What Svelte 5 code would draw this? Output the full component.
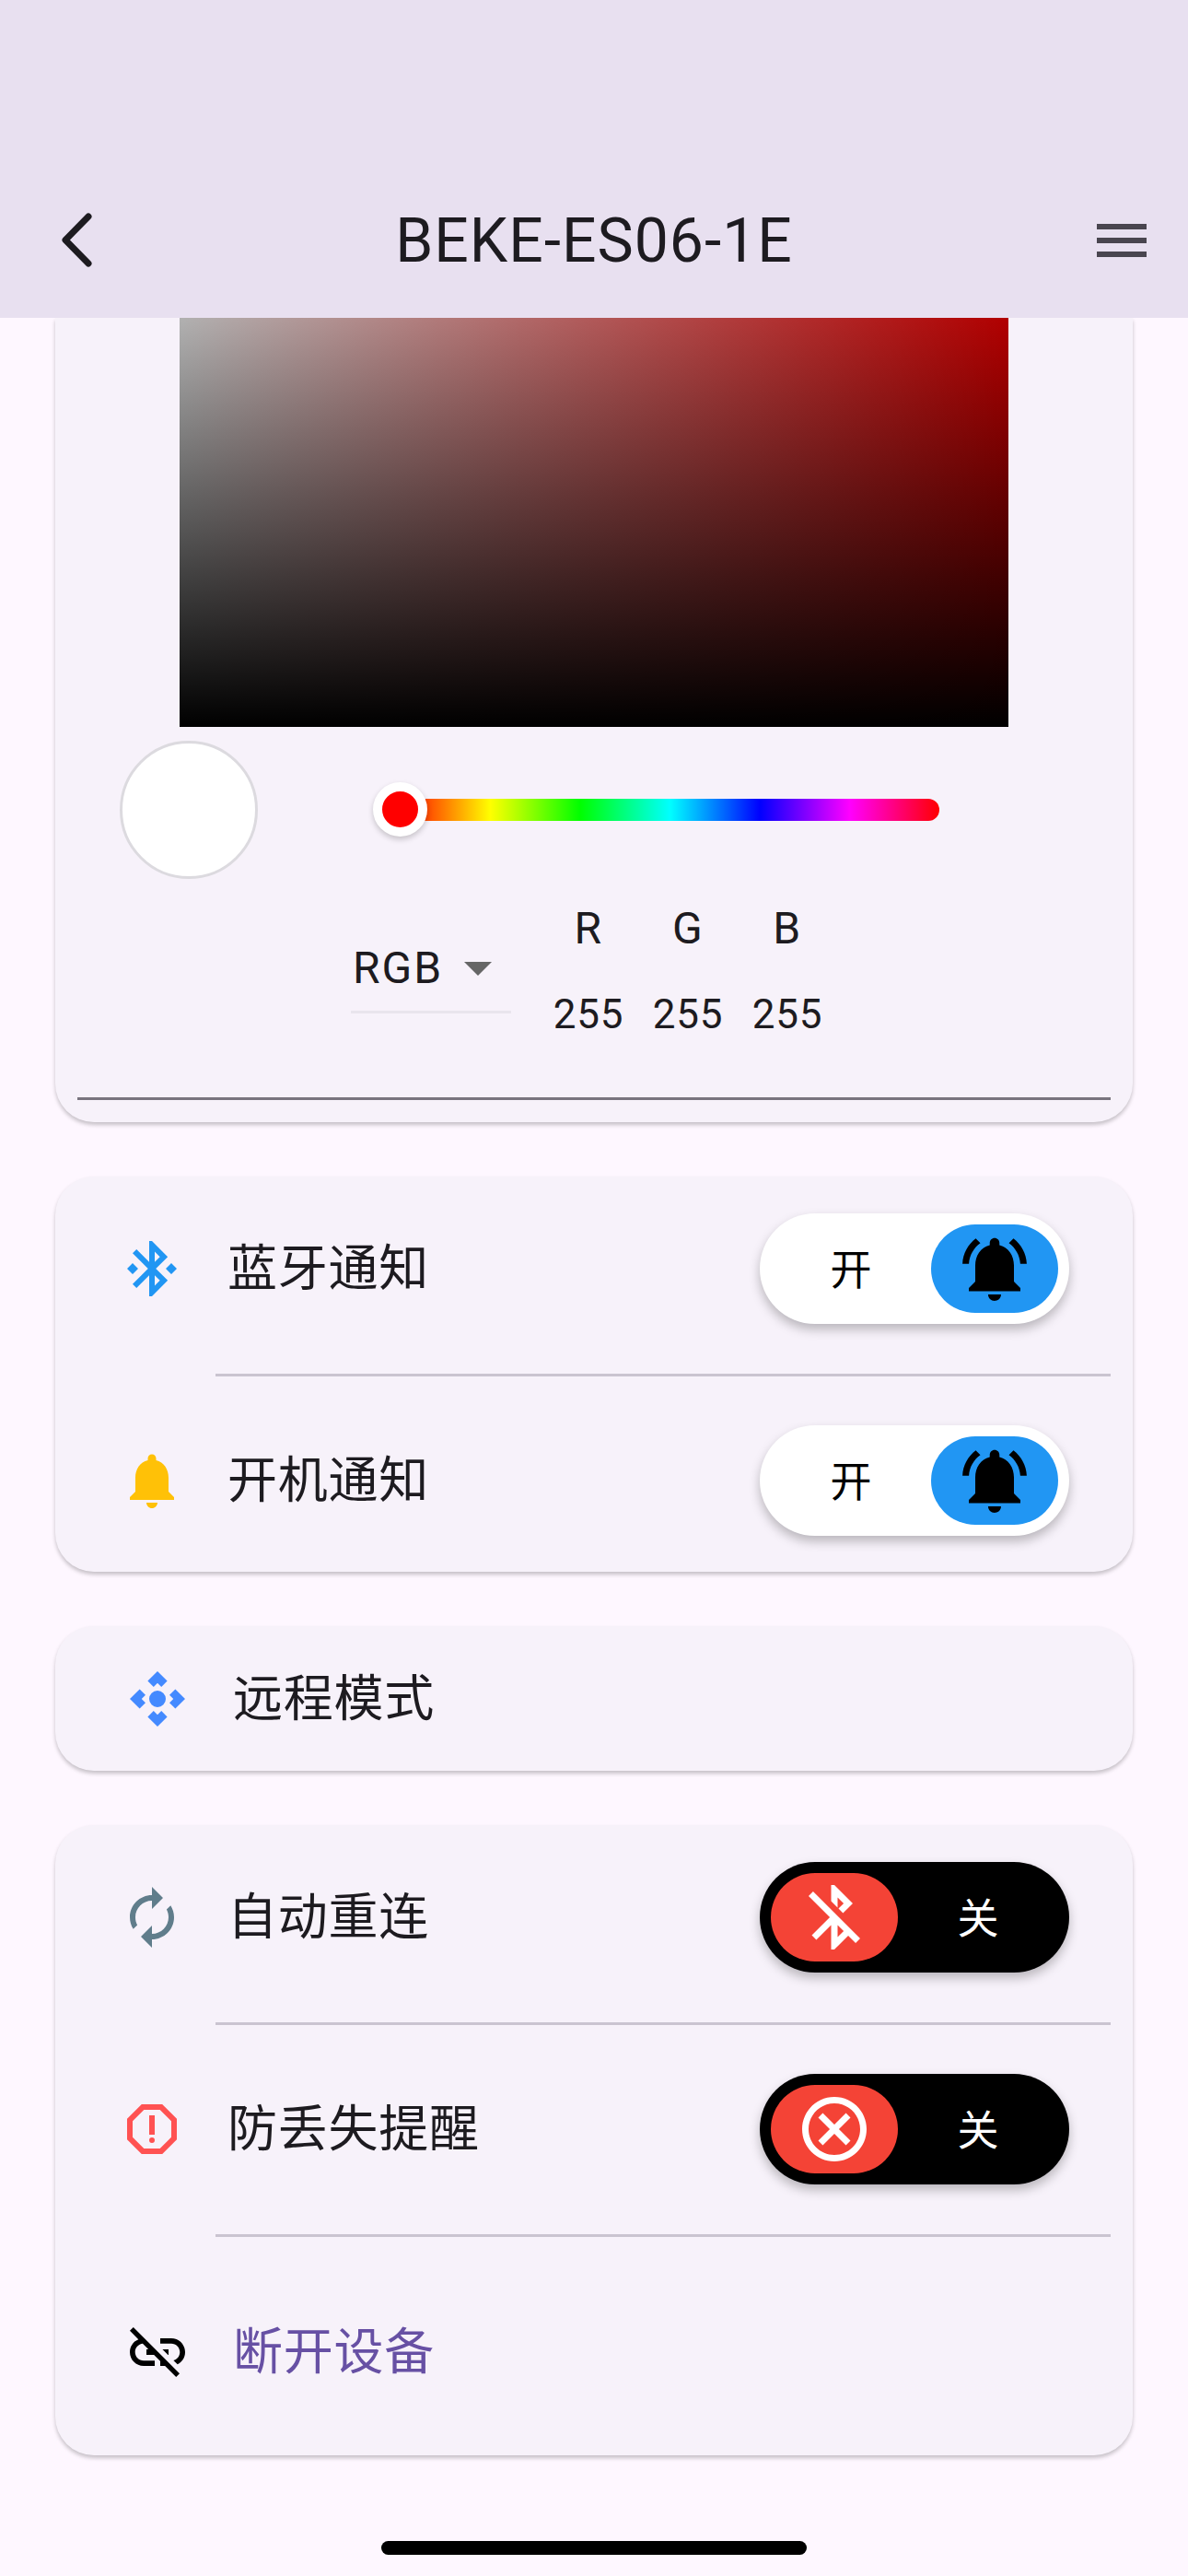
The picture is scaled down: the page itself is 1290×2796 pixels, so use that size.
<script lang="ts">
  const icons = {
    bluetooth:
      'M7 12l-2-2-2 2 2 2 2-2zm10.71-4.29L12 2h-1v7.59L6.41 5 5 6.41 10.59 12 5 17.59 6.41 19 11 14.41V22h1l5.71-5.71-4.3-4.29 4.3-4.29zM13 5.83l1.88 1.88L13 9.59V5.83zm1.88 10.46L13 18.17v-3.76l1.88 1.88zM19 10l-2 2 2 2 2-2-2-2z',
    bell: 'M12 22c1.1 0 2-.9 2-2h-4c0 1.1.89 2 2 2zm6-6v-5c0-3.07-1.64-5.64-4.5-6.32V4c0-.83-.67-1.5-1.5-1.5s-1.5.67-1.5 1.5v.68C7.63 5.36 6 7.92 6 11v5l-2 2v1h16v-1l-2-2z',
    bellActive:
      'M7.58 4.08L6.15 2.65C3.75 4.48 2.17 7.3 2.03 10.5h2c.15-2.65 1.51-4.97 3.55-6.42zm12.39 6.42h2c-.15-3.2-1.73-6.02-4.12-7.85l-1.42 1.43c2.02 1.45 3.39 3.77 3.54 6.42zM18 11c0-3.07-1.64-5.64-4.5-6.32V4c0-.83-.67-1.5-1.5-1.5s-1.5.67-1.5 1.5v.68C7.63 5.36 6 7.92 6 11v5l-2 2v1h16v-1l-2-2v-5zm-6 11c.14 0 .27-.01.4-.04.65-.14 1.18-.58 1.44-1.18.1-.24.15-.5.15-.78h-4c.01 1.1.9 2 2.01 2z',
    bluetoothOff:
      'M13 5.83l1.88 1.88-1.6 1.6 1.41 1.41 3.02-3.02L12 2h-1v5.03l2 2v-3.2zM5.41 4L4 5.41 10.59 12 5 17.59 6.41 19 11 14.41V22h1l4.29-4.29 2.3 2.29L20 18.59 5.41 4zM13 18.17v-3.76l1.88 1.88L13 18.17z',
    highlightOff:
      'M15.59 7L12 10.59 8.41 7 7 8.41 10.59 12 7 15.59 8.41 17 12 13.41 15.59 17 17 15.59 13.41 12 17 8.41 15.59 7zM12 2C6.47 2 2 6.47 2 12s4.47 10 10 10 10-4.47 10-10S17.53 2 12 2zm0 18c-4.41 0-8-3.59-8-8s3.59-8 8-8 8 3.59 8 8-3.59 8-8 8z',
    camera:
      'M15.54 5.54L13.41 7.66 12 6.25 10.59 7.66 8.46 5.54 12 2zM18.46 15.54l-2.12-2.13L17.75 12l-1.41-1.41 2.12-2.13L22 12zM8.46 18.46l2.13-2.12L12 17.75l1.41-1.41 2.12 2.12L12 22zM5.54 8.46l2.12 2.13L6.25 12l1.41 1.41-2.12 2.13L2 12zM12 9a3 3 0 1 0 0 6 3 3 0 0 0 0-6z',
    renew:
      'M12 6v3l4-4-4-4v3c-4.42 0-8 3.58-8 8 0 1.57.46 3.03 1.24 4.26L6.7 14.8c-.45-.83-.7-1.79-.7-2.8 0-3.31 2.69-6 6-6zm6.76 1.74L17.3 9.2c.44.84.7 1.79.7 2.8 0 3.31-2.69 6-6 6v-3l-4 4 4 4v-3c4.42 0 8-3.58 8-8 0-1.57-.46-3.03-1.24-4.26z',
    report:
      'M15.73 3H8.27L3 8.27v7.46L8.27 21h7.46L21 15.73V8.27L15.73 3zM19 14.9L14.9 19H9.1L5 14.9V9.1L9.1 5h5.8L19 9.1v5.8zM11 7h2v7h-2zM12 15a1 1 0 1 0 0 2 1 1 0 0 0 0-2z',
    linkOff:
      'M17 7h-4v1.9h4c1.71 0 3.1 1.39 3.1 3.1 0 1.43-.98 2.63-2.31 2.98l1.46 1.46C20.88 15.61 22 13.95 22 12c0-2.76-2.24-5-5-5zm-1 4h-2.19l2 2H16zM2 4.27l3.11 3.11C3.29 8.12 2 9.91 2 12c0 2.76 2.24 5 5 5h4v-1.9H7c-1.71 0-3.1-1.39-3.1-3.1 0-1.59 1.21-2.9 2.76-3.07L8.73 11H8v2h2.73L13 15.27V17h1.73l4.01 4L20 19.74 3.27 3 2 4.27z',
    menu: 'M3 18h18v-2H3v2zm0-5h18v-2H3v2zm0-7v2h18V6H3z',
    dropdown: 'M7 10l5 5 5-5z',
  };

  const channels = ['R', 'G', 'B'];
</script>

{#snippet icon(d: string, size: number, color: string)}
  <svg class="icon" width={size} height={size} viewBox="0 0 24 24" fill={color}><path {d} /></svg>
{/snippet}

{#snippet toggle(on: boolean, d: string)}
  <div class="toggle" class:on>
    {#if on}
      <span class="toggle-text">开</span>
      <span class="knob">{@render icon(d, 84, '#000')}</span>
    {:else}
      <span class="knob">{@render icon(d, 84, '#fff')}</span>
      <span class="toggle-text">关</span>
    {/if}
  </div>
{/snippet}

<div class="page">
  <header class="appbar">
    <div class="back">
      <svg width="36" height="60" viewBox="0 0 36 60" fill="none" stroke="#1d1b20" stroke-width="7" stroke-linecap="round" stroke-linejoin="round">
        <path d="M31 4 L6 29.5 L31 55" />
      </svg>
    </div>
    <h1>BEKE-ES06-1E</h1>
    <div class="menu">{@render icon(icons.menu, 72, '#49454f')}</div>
  </header>

  <main>
    <section class="card picker">
      <div class="color-area"></div>

      <div class="hue-row">
        <div class="preview"></div>
        <div class="hue-track">
          <span class="hue-thumb"></span>
        </div>
      </div>

      <div class="inputs">
        <div class="mode">
          <div class="mode-value">
            <span>RGB</span>
            {@render icon(icons.dropdown, 72, '#666')}
          </div>
          <div class="mode-line"></div>
        </div>
        {#each channels as c}
          <div class="channel">
            <span class="channel-label">{c}</span>
            <span class="channel-value">255</span>
          </div>
        {/each}
      </div>

      <div class="picker-divider"></div>
    </section>

    <section class="card">
      <div class="row">
        {@render icon(icons.bluetooth, 72, '#2196f3')}
        <span class="label">蓝牙通知</span>
        {@render toggle(true, icons.bellActive)}
      </div>
      <div class="divider"></div>
      <div class="row last">
        {@render icon(icons.bell, 72, '#ffc107')}
        <span class="label">开机通知</span>
        {@render toggle(true, icons.bellActive)}
      </div>
    </section>

    <section class="card">
      <div class="row plain remote">
        {@render icon(icons.camera, 72, '#448aff')}
        <span class="label">远程模式</span>
      </div>
    </section>

    <section class="card">
      <div class="row">
        {@render icon(icons.renew, 72, '#607d8b')}
        <span class="label">自动重连</span>
        {@render toggle(false, icons.bluetoothOff)}
      </div>
      <div class="divider"></div>
      <div class="row">
        {@render icon(icons.report, 72, '#ff5252')}
        <span class="label">防丢失提醒</span>
        {@render toggle(false, icons.highlightOff)}
      </div>
      <div class="divider"></div>
      <div class="row plain disconnect">
        {@render icon(icons.linkOff, 72, '#000')}
        <span class="label link">断开设备</span>
      </div>
    </section>
  </main>

  <div class="home-indicator"></div>
</div>

<style>
  :global(body) {
    background: #fef7ff;
  }

  .page {
    height: 2796px;
    overflow: hidden;
    font-family: Roboto, 'Noto Sans CJK SC', sans-serif;
    color: #1d1b20;
    background: #fef7ff;
  }

  .icon {
    display: block;
    flex: none;
  }

  .appbar {
    position: relative;
    z-index: 1;
    display: grid;
    grid-template-columns: 1fr auto 1fr;
    align-items: center;
    height: 168px;
    padding-top: 177px;
    background: #e8e0f0;
  }

  .appbar h1 {
    margin: 2px 0 0;
    font-size: 66px;
    font-weight: 400;
    letter-spacing: 1px;
    line-height: 84px;
  }

  .back {
    padding-left: 65px;
    line-height: 0;
  }

  .menu {
    display: flex;
    justify-content: flex-end;
    padding-right: 36px;
  }

  main {
    display: flex;
    flex-direction: column;
    gap: 59px;
    padding: 0 60px;
  }

  .card {
    background: #f7f2fa;
    border-radius: 42px;
    box-shadow: 0 3px 4px rgba(0, 0, 0, 0.22);
  }

  .picker {
    border-radius: 0 0 42px 42px;
    padding-bottom: 24px;
  }

  .color-area {
    width: 900px;
    height: 444px;
    margin: 0 auto;
    background:
      linear-gradient(to top, #000 0, rgba(0, 0, 0, 0) 640px),
      linear-gradient(to right, #fff, #f00);
  }

  .hue-row {
    display: flex;
    align-items: center;
    padding: 15px 0 0 70px;
  }

  .preview {
    width: 150px;
    height: 150px;
    box-sizing: border-box;
    background: #fff;
    border: 3px solid #dcdadf;
    border-radius: 50%;
  }

  .hue-track {
    position: relative;
    width: 585px;
    height: 24px;
    margin-left: 155px;
    border-radius: 0 12px 12px 0;
    background: linear-gradient(to right, #f00, #ff0, #0f0, #0ff, #00f, #f0f, #f00);
  }

  .hue-thumb {
    position: absolute;
    left: -30px;
    top: -18px;
    width: 39px;
    height: 39px;
    background: #f00;
    border: 10.5px solid #fff;
    border-radius: 50%;
    box-shadow: 0 3px 6px rgba(0, 0, 0, 0.2);
  }

  .inputs {
    display: flex;
    justify-content: center;
    margin-top: 20px;
  }

  .mode {
    width: 174px;
    margin-right: 30px;
    padding-top: 40px;
  }

  .mode-value {
    display: flex;
    align-items: center;
    justify-content: space-between;
    height: 72px;
    padding-left: 2px;
    font-size: 48px;
    font-weight: 450;
    letter-spacing: 2px;
  }

  .mode-line {
    height: 3px;
    margin-top: 11px;
    background: #e9e5ed;
  }

  .channel {
    display: flex;
    flex-direction: column;
    align-items: center;
    gap: 33px;
    width: 108px;
    padding-top: 3px;
    text-align: center;
  }

  .channel-label {
    margin-top: -1px;
    margin-bottom: 1px;
    font-size: 48px;
    line-height: 64px;
    letter-spacing: 1.5px;
  }

  .channel-value {
    font-size: 44px;
    line-height: 54px;
    letter-spacing: 0.75px;
  }

  .picker-divider {
    height: 3px;
    margin: 63px 24px 0;
    background: #79747e;
  }

  .row {
    display: flex;
    align-items: center;
    padding: 40px 69px 40px 69px;
  }

  .row.last {
    padding-bottom: 39px;
  }

  .row.plain {
    padding-left: 75px;
  }

  .remote {
    height: 157px;
    padding-top: 0;
    padding-bottom: 0;
  }

  .disconnect {
    height: 224px;
    padding-top: 0;
    padding-bottom: 0;
    box-sizing: border-box;
  }

  .label {
    flex: 1;
    margin-left: 46px;
    padding-top: 2px;
    font-size: 54px;
    letter-spacing: 0.75px;
    line-height: 72px;
  }

  .link {
    color: #6750a4;
  }

  .divider {
    height: 3px;
    margin: 14px 24px 13px 174px;
    background: #cac4d0;
  }

  .toggle {
    display: flex;
    align-items: center;
    box-sizing: border-box;
    width: 336px;
    height: 120px;
    padding: 12px;
    border-radius: 60px;
    background: #000;
    box-shadow: 0 6px 12px rgba(0, 0, 0, 0.25);
  }

  .toggle.on {
    background: #fff;
  }

  .toggle-text {
    flex: 1;
    padding-bottom: 3px;
    font-size: 45px;
    text-align: center;
    color: #fff;
  }

  .toggle.on .toggle-text {
    color: #000;
  }

  .knob {
    display: flex;
    align-items: center;
    justify-content: center;
    width: 138px;
    height: 96px;
    border-radius: 48px;
    background: #f44336;
  }

  .toggle.on .knob {
    background: #2196f3;
  }

  .home-indicator {
    width: 462px;
    height: 15px;
    margin: 93px auto 0;
    border-radius: 8px;
    background: #000;
  }
</style>
